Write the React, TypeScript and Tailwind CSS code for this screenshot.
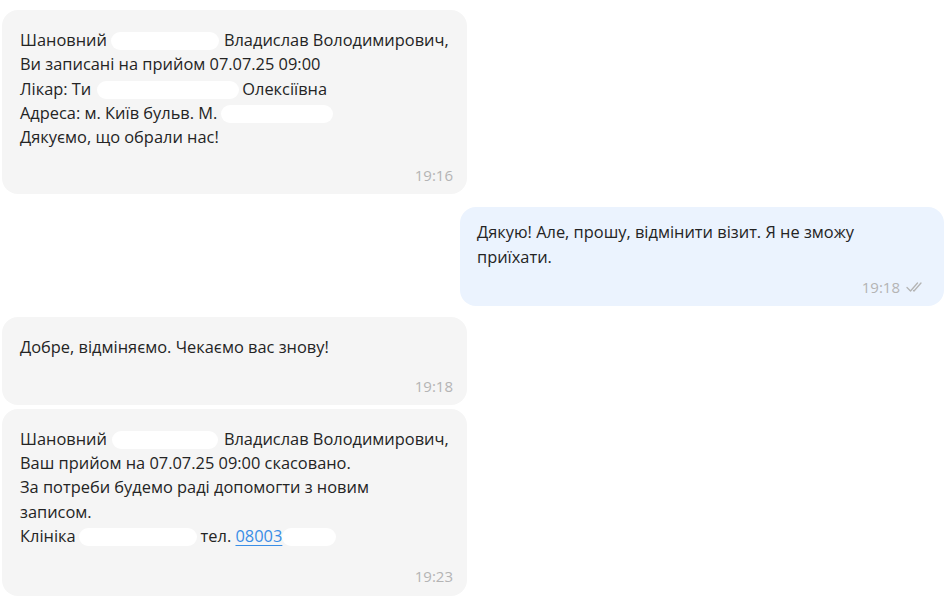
import React from "react";

const Blob = ({ w, ml = 0, mr = 0 }: { w: number; ml?: number; mr?: number }) => (
  <span
    className="inline-block h-[18px] bg-white rounded-[9px] align-[-4px]"
    style={{ width: w, marginLeft: ml, marginRight: mr }}
  />
);

const Time = ({ t, checks = false, mt }: { t: string; checks?: boolean; mt: string }) => (
  <div className={`flex justify-end items-center gap-[6px] ${mt} text-[15px] leading-[20px] text-[#b4b4b4]`}>
    <span>{t}</span>
    {checks && (
      <svg width="22" height="12" viewBox="0 0 22 12" fill="none" stroke="#b4b4b4" strokeWidth="1.3" strokeLinecap="round" strokeLinejoin="round">
        <path d="M1 6.5 L4.5 10 L11.5 2" />
        <path d="M7.5 9.5 L8 10 L15 2" />
      </svg>
    )}
  </div>
);

export default function App() {
  return (
    <div
      className="w-[952px] h-[602px] bg-white overflow-hidden pt-[10px] pl-[2px] pr-[8px] text-[#242424]"
      style={{ fontFamily: '"Open Sans", "Noto Sans", sans-serif' }}
    >
      <div className="flex flex-col">
        {/* Bubble 1 */}
        <div className="w-[465px] bg-[#f5f5f5] rounded-[16px] pt-[18px] pl-[18px] pr-[14px] pb-[9px] text-[16.4px] leading-[24.3px]">
          <div className="whitespace-nowrap">
            Шановний<Blob w={108} ml={4} mr={5} />Владислав Володимирович,
          </div>
          <div>Ви записані на прийом 07.07.25 09:00</div>
          <div className="whitespace-nowrap">
            Лікар: Ти<Blob w={142} ml={6} mr={3} />Олексіївна
          </div>
          <div className="whitespace-nowrap">
            Адреса: м. Київ бульв. М.<Blob w={112} ml={4} />
          </div>
          <div>Дякуємо, що обрали нас!</div>
          <Time t="19:16" mt="mt-[16px]" />
        </div>

        {/* Bubble 2 */}
        <div className="self-end w-[484px] mt-[13px] bg-[#ebf3fe] rounded-[16px] pt-[13px] pl-[17px] pr-[16px] pb-[9px] text-[16.4px] leading-[24.5px]">
          <div className="w-[430px]">Дякую! Але, прошу, відмінити візит. Я не зможу приїхати.</div>
          <Time t="19:18" checks mt="mt-[8px]" />
        </div>

        {/* Bubble 3 */}
        <div className="w-[465px] mt-[11px] bg-[#f5f5f5] rounded-[16px] pt-[18px] pl-[18px] pr-[14px] pb-[9px] text-[16.4px] leading-[24.3px]">
          <div>Добре, відміняємо. Чекаємо вас знову!</div>
          <Time t="19:18" mt="mt-[16px]" />
        </div>

        {/* Bubble 4 */}
        <div className="w-[465px] mt-[4px] bg-[#f5f5f5] rounded-[16px] pt-[18px] pl-[18px] pr-[14px] pb-[10px] text-[16.4px] leading-[24.3px]">
          <div className="whitespace-nowrap">
            Шановний<Blob w={106} ml={5} mr={6} />Владислав Володимирович,
          </div>
          <div>Ваш прийом на 07.07.25 09:00 скасовано.</div>
          <div>За потреби будемо раді допомогти з новим</div>
          <div>записом.</div>
          <div className="whitespace-nowrap">
            Клініка<Blob w={118} ml={3} mr={4} />тел.{" "}
            <span className="text-[#3a8ee6] underline underline-offset-[3px]">08003</span>
            <Blob w={54} />
          </div>
          <Time t="19:23" mt="mt-[18px]" />
        </div>
      </div>
    </div>
  );
}
